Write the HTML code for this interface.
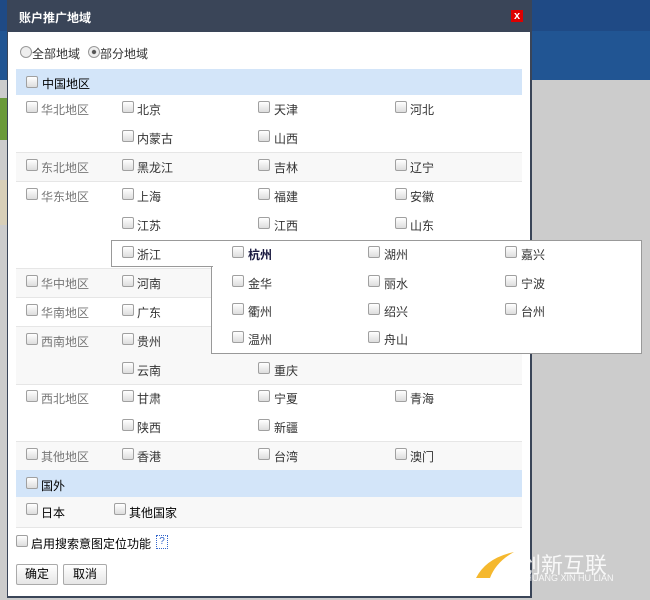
<!DOCTYPE html>
<html><head><meta charset="utf-8"><style>
body{margin:0;width:650px;height:600px;position:relative;overflow:hidden;background:#ccc;font-family:"Liberation Sans","Noto Sans CJK SC",sans-serif;font-size:12px;color:#333}
.a{position:absolute;white-space:nowrap}
.cb{position:absolute;width:10px;height:10px;border:1px solid #a0a0a0;border-radius:2px;background:linear-gradient(#fff,#ddd)}
.rw{position:absolute;left:16px;width:506px;border-bottom:1px solid #e6e6e6}
.g{color:#777}
</style></head><body>
<div class="a" style="left:0;top:0;width:650px;height:31px;background:#1f4a85"></div>
<div class="a" style="left:0;top:31px;width:650px;height:49px;background:#215593"></div>
<div class="a" style="left:0;top:98px;width:7px;height:42px;background:#6a9a3a"></div>
<div class="a" style="left:0;top:180px;width:7px;height:45px;background:#d8cfb8"></div>
<div class="a" style="left:7px;top:0;width:525px;height:598px;background:#3a4558"></div>
<div class="a" style="left:19px;top:9px;color:#fff;font-weight:bold;font-size:12px">账户推广地域</div>
<div class="a" style="left:511px;top:10px;width:12px;height:12px;background:#d00;color:#fff;font-weight:bold;font-size:11px;line-height:12px;text-align:center">x</div>
<div class="a" style="left:8px;top:32px;width:522px;height:564px;background:#fff"></div>

<div class="a" style="left:20px;top:46px;width:10px;height:10px;border:1px solid #999;border-radius:50%;background:#eee"></div>
<div class="a" style="left:32px;top:45px">全部地域</div>
<div class="a" style="left:88px;top:46px;width:10px;height:10px;border:1px solid #999;border-radius:50%;background:radial-gradient(#555 25%,#eee 35%)"></div>
<div class="a" style="left:100px;top:45px">部分地域</div>

<div class="rw" style="top:69px;height:26px;background:#d3e5f9;border:none"></div>
<div class="rw" style="top:95px;height:57px;background:#fff"></div>
<div class="rw" style="top:153px;height:28px;background:#f8f8f8"></div>
<div class="rw" style="top:182px;height:86px;background:#fff"></div>
<div class="rw" style="top:269px;height:28px;background:#f8f8f8"></div>
<div class="rw" style="top:298px;height:28px;background:#fff"></div>
<div class="rw" style="top:327px;height:57px;background:#f8f8f8"></div>
<div class="rw" style="top:385px;height:56px;background:#fff"></div>
<div class="rw" style="top:442px;height:28px;background:#f8f8f8"></div>
<div class="rw" style="top:470px;height:27px;background:#d3e5f9;border:none"></div>
<div class="rw" style="top:497px;height:30px;background:#f8f8f8"></div>

<div class="cb" style="left:26px;top:76px"></div><div class="a" style="left:42px;top:75px;color:#000">中国地区</div>

<div class="cb" style="left:26px;top:101px"></div><div class="a g" style="left:41px;top:101px">华北地区</div>
<div class="cb" style="left:122px;top:101px"></div><div class="a" style="left:137px;top:101px">北京</div>
<div class="cb" style="left:258px;top:101px"></div><div class="a" style="left:274px;top:101px">天津</div>
<div class="cb" style="left:395px;top:101px"></div><div class="a" style="left:410px;top:101px">河北</div>
<div class="cb" style="left:122px;top:130px"></div><div class="a" style="left:137px;top:130px">内蒙古</div>
<div class="cb" style="left:258px;top:130px"></div><div class="a" style="left:274px;top:130px">山西</div>

<div class="cb" style="left:26px;top:159px"></div><div class="a g" style="left:41px;top:159px">东北地区</div>
<div class="cb" style="left:122px;top:159px"></div><div class="a" style="left:137px;top:159px">黑龙江</div>
<div class="cb" style="left:258px;top:159px"></div><div class="a" style="left:274px;top:159px">吉林</div>
<div class="cb" style="left:395px;top:159px"></div><div class="a" style="left:410px;top:159px">辽宁</div>

<div class="cb" style="left:26px;top:188px"></div><div class="a g" style="left:41px;top:188px">华东地区</div>
<div class="cb" style="left:122px;top:188px"></div><div class="a" style="left:137px;top:188px">上海</div>
<div class="cb" style="left:258px;top:188px"></div><div class="a" style="left:274px;top:188px">福建</div>
<div class="cb" style="left:395px;top:188px"></div><div class="a" style="left:410px;top:188px">安徽</div>
<div class="cb" style="left:122px;top:217px"></div><div class="a" style="left:137px;top:217px">江苏</div>
<div class="cb" style="left:258px;top:217px"></div><div class="a" style="left:274px;top:217px">江西</div>
<div class="cb" style="left:395px;top:217px"></div><div class="a" style="left:410px;top:217px">山东</div>

<div class="cb" style="left:26px;top:275px"></div><div class="a g" style="left:41px;top:275px">华中地区</div>
<div class="cb" style="left:122px;top:275px"></div><div class="a" style="left:137px;top:275px">河南</div>
<div class="cb" style="left:26px;top:304px"></div><div class="a g" style="left:41px;top:304px">华南地区</div>
<div class="cb" style="left:122px;top:304px"></div><div class="a" style="left:137px;top:304px">广东</div>
<div class="cb" style="left:26px;top:333px"></div><div class="a g" style="left:41px;top:333px">西南地区</div>
<div class="cb" style="left:122px;top:333px"></div><div class="a" style="left:137px;top:333px">贵州</div>
<div class="cb" style="left:122px;top:362px"></div><div class="a" style="left:137px;top:362px">云南</div>
<div class="cb" style="left:258px;top:362px"></div><div class="a" style="left:274px;top:362px">重庆</div>
<div class="cb" style="left:26px;top:390px"></div><div class="a g" style="left:41px;top:390px">西北地区</div>
<div class="cb" style="left:122px;top:390px"></div><div class="a" style="left:137px;top:390px">甘肃</div>
<div class="cb" style="left:258px;top:390px"></div><div class="a" style="left:274px;top:390px">宁夏</div>
<div class="cb" style="left:395px;top:390px"></div><div class="a" style="left:410px;top:390px">青海</div>
<div class="cb" style="left:122px;top:419px"></div><div class="a" style="left:137px;top:419px">陕西</div>
<div class="cb" style="left:258px;top:419px"></div><div class="a" style="left:274px;top:419px">新疆</div>
<div class="cb" style="left:26px;top:448px"></div><div class="a g" style="left:41px;top:448px">其他地区</div>
<div class="cb" style="left:122px;top:448px"></div><div class="a" style="left:137px;top:448px">香港</div>
<div class="cb" style="left:258px;top:448px"></div><div class="a" style="left:274px;top:448px">台湾</div>
<div class="cb" style="left:395px;top:448px"></div><div class="a" style="left:410px;top:448px">澳门</div>

<div class="cb" style="left:26px;top:477px"></div><div class="a" style="left:41px;top:477px;color:#000">国外</div>
<div class="cb" style="left:26px;top:503px"></div><div class="a" style="left:41px;top:504px;color:#000">日本</div>
<div class="cb" style="left:114px;top:503px"></div><div class="a" style="left:129px;top:504px;color:#000">其他国家</div>

<div class="cb" style="left:16px;top:535px"></div><div class="a" style="left:31px;top:535px;color:#000">启用搜索意图定位功能</div>
<div class="a" style="left:156px;top:535px;width:10px;height:12px;border:1px dotted #36c;color:#36c;font-size:10px;line-height:12px;text-align:center">?</div>
<div class="a" style="left:16px;top:564px;width:40px;height:19px;border:1px solid #aaa;border-radius:2px;background:linear-gradient(#fff,#e6e6e6);text-align:center;line-height:19px;color:#000">确定</div>
<div class="a" style="left:63px;top:564px;width:42px;height:19px;border:1px solid #aaa;border-radius:2px;background:linear-gradient(#fff,#e6e6e6);text-align:center;line-height:19px;color:#000">取消</div>

<!-- popup -->
<div class="a" style="left:211px;top:240px;width:429px;height:112px;border:1px solid #999;background:#fff"></div>
<div class="a" style="left:111px;top:240px;width:101px;height:25px;border:1px solid #999;border-right:none;background:#fff"></div>
<div class="cb" style="left:122px;top:246px"></div><div class="a" style="left:137px;top:246px">浙江</div>
<div class="cb" style="left:232px;top:246px"></div><div class="a" style="left:248px;top:246px;font-weight:bold;color:#1a1a40">杭州</div>
<div class="cb" style="left:368px;top:246px"></div><div class="a" style="left:384px;top:246px">湖州</div>
<div class="cb" style="left:505px;top:246px"></div><div class="a" style="left:521px;top:246px">嘉兴</div>
<div class="cb" style="left:232px;top:275px"></div><div class="a" style="left:248px;top:275px">金华</div>
<div class="cb" style="left:368px;top:275px"></div><div class="a" style="left:384px;top:275px">丽水</div>
<div class="cb" style="left:505px;top:275px"></div><div class="a" style="left:521px;top:275px">宁波</div>
<div class="cb" style="left:232px;top:303px"></div><div class="a" style="left:248px;top:303px">衢州</div>
<div class="cb" style="left:368px;top:303px"></div><div class="a" style="left:384px;top:303px">绍兴</div>
<div class="cb" style="left:505px;top:303px"></div><div class="a" style="left:521px;top:303px">台州</div>
<div class="cb" style="left:232px;top:331px"></div><div class="a" style="left:248px;top:331px">温州</div>
<div class="cb" style="left:368px;top:331px"></div><div class="a" style="left:384px;top:331px">舟山</div>

<!-- watermark -->
<svg class="a" style="left:476px;top:550px" width="40" height="30"><path d="M0 28 Q10 8 38 2 Q20 12 14 28 Z" fill="#f5b82e"/></svg>
<div class="a" style="left:519px;top:548px;font-size:22px;color:rgba(255,255,255,.85)">创新互联</div>
<div class="a" style="left:519px;top:573px;font-size:9px;color:rgba(255,255,255,.85)">CHUANG XIN HU LIAN</div>
</body></html>
